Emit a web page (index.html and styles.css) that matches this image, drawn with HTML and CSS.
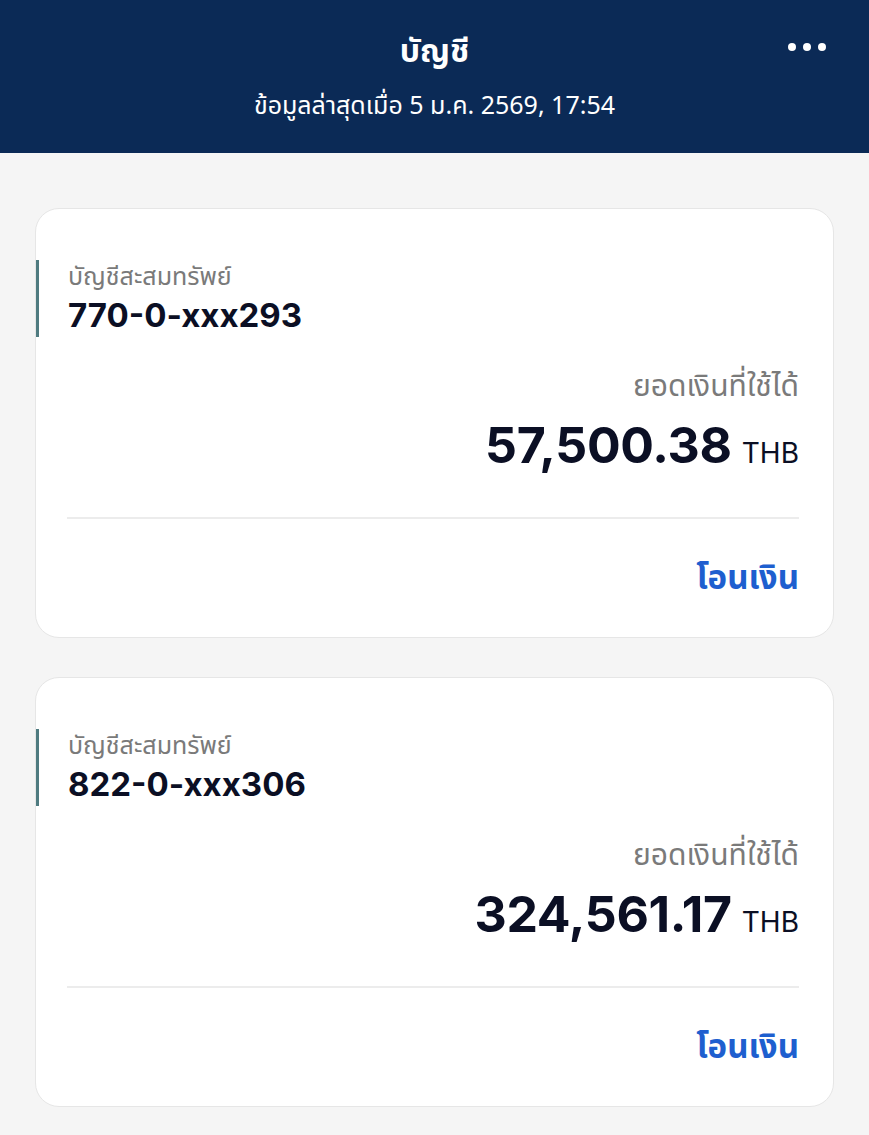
FILE: index.html
```html
<!DOCTYPE html>
<html lang="th">
<head>
    <meta charset="UTF-8">
    <meta name="viewport" content="width=device-width, initial-scale=1.0">
    <title>บัญชี</title>
    <link rel="stylesheet" href="styles.css">
</head>
<body>
    <header class="top-bar">
        <h1 class="top-title">บัญชี</h1>
        <p class="top-sub">ข้อมูลล่าสุดเมื่อ 5 ม.ค. 2569, 17:54</p>
        <button class="more-button" aria-label="more">
            <span></span><span></span><span></span>
        </button>
    </header>

    <main class="account-list">
        <div class="account-card">
            <div class="account-info">
                <div class="account-type">บัญชีสะสมทรัพย์</div>
                <div class="account-number">770-0-xxx293</div>
            </div>
            <div class="balance">
                <div class="balance-label">ยอดเงินที่ใช้ได้</div>
                <div class="balance-amount">57,500.38<span class="currency">THB</span></div>
            </div>
            <div class="card-footer">
                <a class="transfer-link" href="#">โอนเงิน</a>
            </div>
        </div>

        <div class="account-card">
            <div class="account-info">
                <div class="account-type">บัญชีสะสมทรัพย์</div>
                <div class="account-number">822-0-xxx306</div>
            </div>
            <div class="balance">
                <div class="balance-label">ยอดเงินที่ใช้ได้</div>
                <div class="balance-amount">324,561.17<span class="currency">THB</span></div>
            </div>
            <div class="card-footer">
                <a class="transfer-link" href="#">โอนเงิน</a>
            </div>
        </div>
    </main>
</body>
</html>
```

FILE: styles.css
```css
/* Basic styles */
body {
    margin: 0;
    font-family: "Noto Sans Thai", Inter, "Noto Sans", sans-serif;
    background-color: #f5f5f5;
    color: #0b0f24;
}

/* Header */
.top-bar {
    position: relative;
    background-color: #0b2a56;
    color: #fff;
    height: 153px;
    text-align: center;
    box-sizing: border-box;
    padding-top: 30px;
}
.top-title {
    margin: 0;
    font-size: 32px;
    font-weight: 700;
    line-height: 44px;
}
.top-sub {
    margin: 16px 0 0;
    font-size: 25px;
    line-height: 32px;
}
.more-button {
    position: absolute;
    top: 43px;
    right: 43px;
    display: flex;
    gap: 7px;
    padding: 0;
    border: none;
    background: none;
}
.more-button span {
    width: 8px;
    height: 8px;
    border-radius: 50%;
    background: #fff;
}

/* Cards */
.account-list {
    padding: 55px 35px 30px;
    display: flex;
    flex-direction: column;
    gap: 39px;
}
.account-card {
    background: #fff;
    border: 1px solid #e6e6e6;
    border-radius: 24px;
    padding: 51px 34px 0 31px;
    height: 430px;
    box-sizing: border-box;
}
.account-info {
    margin-left: -31px;
    border-left: 3px solid #4f7b80;
    padding-left: 29px;
}
.account-type {
    font-size: 25px;
    line-height: 34px;
    color: #7a7a7a;
}
.account-number {
    font-family: Inter, sans-serif;
    font-size: 33px;
    font-weight: 700;
    line-height: 43px;
}
.balance {
    text-align: right;
    margin-top: 30px;
}
.balance-label {
    font-size: 30px;
    line-height: 40px;
    color: #7a7a7a;
}
.balance-amount {
    margin-top: 8px;
    font-family: Inter, sans-serif;
    font-size: 50px;
    font-weight: 700;
    line-height: 60px;
    letter-spacing: -0.3px;
}
.currency {
    font-size: 28px;
    font-weight: 400;
    line-height: 1;
    margin-left: 10px;
    letter-spacing: 0;
}
.card-footer {
    margin-top: 42px;
    border-top: 2px solid #ececec;
    padding-top: 40px;
    text-align: right;
}
.transfer-link {
    display: inline-block;
    color: #1e5fcf;
    font-size: 33px;
    font-weight: 700;
    line-height: 40px;
    text-decoration: none;
}
```
